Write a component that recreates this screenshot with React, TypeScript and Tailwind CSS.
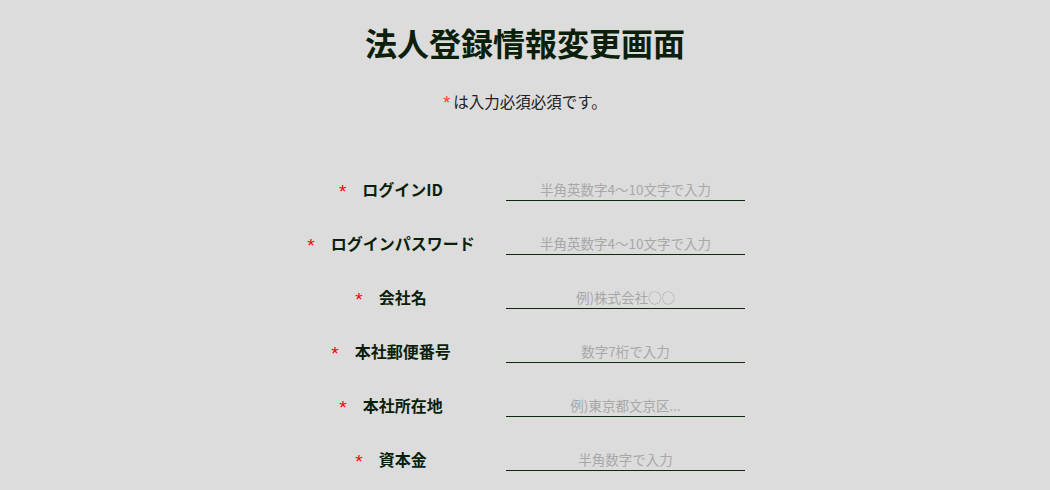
import React from "react";

const rows = [
  { label: "ログインID", ph: "半角英数字4〜10文字で入力" },
  { label: "ログインパスワード", ph: "半角英数字4〜10文字で入力" },
  { label: "会社名", ph: "例)株式会社○○" },
  { label: "本社郵便番号", ph: "数字7桁で入力" },
  { label: "本社所在地", ph: "例)東京都文京区..." },
  { label: "資本金", ph: "半角数字で入力" },
];

export default function App() {
  return (
    <div
      className="w-[1050px] h-[490px] bg-[#dcdcdc] overflow-hidden text-[#0b1f0b]"
      style={{ fontFamily: '"Noto Sans CJK JP", "Noto Sans", sans-serif' }}
    >
      <h1 className="pt-[22px] text-center text-[32px] leading-[40px] font-bold text-[#0b200b]">
        法人登録情報変更画面
      </h1>
      <p className="mt-[29px] flex justify-center items-center text-[15.5px] leading-[20px] text-[#222]">
        <span className="text-[#ff3b1a] text-[18px] translate-y-[2px] mr-[3px]" style={{ fontFamily: '"Liberation Sans", sans-serif' }}>*</span>
        <span>は入力必須必須です。</span>
      </p>
      <div className="mt-[66px] pl-[291px] flex flex-col gap-[30px]">
        {rows.map((r) => (
          <div key={r.label} className="flex items-center h-[24px]">
            <div className="w-[200px] flex justify-center items-center text-[16px] font-bold">
              <span
                className="text-[#ff0000] font-normal text-[19px] translate-y-[3px] mr-[16px]"
                style={{ fontFamily: '"Liberation Sans", sans-serif' }}
              >
                *
              </span>
              <span>{r.label}</span>
            </div>
            <input
              className="ml-[15px] w-[239px] h-[24px] bg-transparent border-0 border-b border-[#0d2a0d] text-center text-[13.5px] outline-none placeholder:text-[#a8a8a8]"
              placeholder={r.ph}
            />
          </div>
        ))}
      </div>
    </div>
  );
}
